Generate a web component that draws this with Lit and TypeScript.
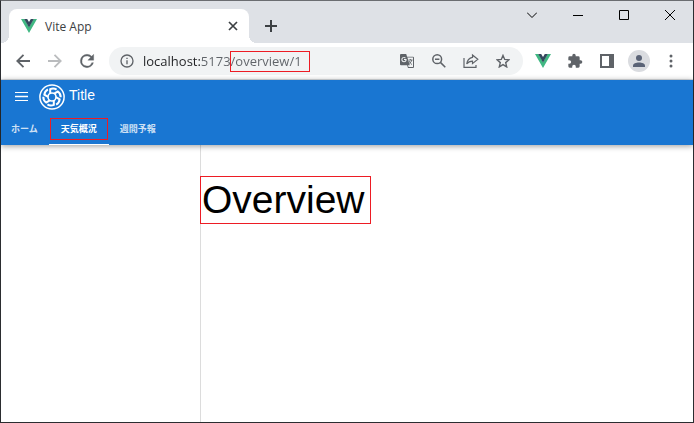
import { LitElement, html, css, svg } from "lit";
import { customElement, state } from "lit/decorators.js";
import { classMap } from "lit/directives/class-map.js";

const vueLogo = html`<svg class="vue" viewBox="0 0 16 14" aria-hidden="true">
  <path fill="#41b883" d="M0 0h3.400L8 8l4.600-8H16L8 14z" />
  <path fill="#34495e" d="M3.200 0H6.200L8 3l1.800-3h3L8 8.400z" />
</svg>`;

const blades = [0, 60, 120, 180, 240, 300];

@customElement("browser-chrome")
export class BrowserChrome extends LitElement {
  static styles = css`
    :host {
      display: block;
      flex: none;
      font-family: "Open Sans", "Noto Sans", sans-serif;
      color: #3c4043;
    }
    button {
      display: flex;
      align-items: center;
      justify-content: center;
      padding: 0;
      border: 0;
      background: none;
      color: #5f6368;
    }
    svg {
      display: block;
      fill: currentColor;
    }
    .line {
      fill: none;
      stroke: currentColor;
    }
    .strip {
      display: flex;
      align-items: flex-start;
      height: 42px;
      background: #dee1e6;
    }
    .tab {
      position: relative;
      display: flex;
      align-items: center;
      box-sizing: border-box;
      width: 240px;
      height: 34px;
      margin: 8px 0 0 8px;
      padding: 0 8px 0 12px;
      border-radius: 8px 8px 0 0;
      background: #fff;
      font-size: 12px;
    }
    .tab::before,
    .tab::after {
      content: "";
      position: absolute;
      bottom: 0;
      width: 8px;
      height: 8px;
    }
    .tab::before {
      right: 100%;
      background: radial-gradient(circle at 0 0, #dee1e6 8px, #fff 8px);
    }
    .tab::after {
      left: 100%;
      background: radial-gradient(circle at 100% 0, #dee1e6 8px, #fff 8px);
    }
    .tab-title {
      flex: 1;
      margin-left: 8px;
    }
    .vue {
      width: 16px;
      height: 14px;
    }
    .close {
      width: 16px;
      height: 16px;
      color: #3c4043;
    }
    .new {
      width: 28px;
      height: 28px;
      margin: 11px 0 0 8px;
      color: #3c4043;
    }
    .window {
      display: flex;
      margin-left: auto;
    }
    .window button {
      width: 46px;
      height: 28px;
      color: #000;
    }
    .toolbar {
      display: flex;
      align-items: center;
      box-sizing: border-box;
      height: 37px;
      padding: 0 6px;
      border-bottom: 1px solid #dcdfe3;
      background: #fff;
    }
    .toolbar button {
      width: 32px;
      height: 28px;
    }
    .toolbar .off {
      color: #babcbe;
    }
    .address {
      display: flex;
      flex: 1;
      align-items: center;
      min-width: 0;
      height: 28px;
      margin: 0 4px 0 6px;
      padding: 0 4px 0 2px;
      border-radius: 14px;
      background: #f1f3f4;
    }
    .field {
      position: relative;
      flex: 1;
      min-width: 0;
    }
    .field input {
      display: block;
      box-sizing: border-box;
      width: 100%;
      height: 20px;
      padding: 0;
      border: 0;
      outline: 0;
      font: 13px/20px "Open Sans", "Noto Sans", sans-serif;
      color: transparent;
      background: linear-gradient(90deg, #202124 57px, #5f6368 57px);
      background-clip: text;
    }
    .mark {
      position: absolute;
      top: 0;
      left: 87px;
      box-sizing: border-box;
      width: 80px;
      height: 21px;
      border: 1px solid #ed1c24;
      pointer-events: none;
    }
    .avatar {
      display: flex;
      align-items: center;
      justify-content: center;
      width: 22px;
      height: 22px;
      border-radius: 50%;
      background: #dadce0;
      color: #5a6376;
    }
  `;

  render() {
    return html`
      <div class="strip">
        <div class="tab">
          ${vueLogo}
          <span class="tab-title">Vite App</span>
          <button class="close" aria-label="Close tab">
            <svg class="line" width="10" height="10" viewBox="0 0 10 10" stroke-width="1.700">
              <path d="M1 1l8 8M9 1l-8 8" />
            </svg>
          </button>
        </div>
        <button class="new" aria-label="New tab">
          <svg class="line" width="12" height="12" viewBox="0 0 12 12" stroke-width="2">
            <path d="M6 0v12M0 6h12" />
          </svg>
        </button>
        <div class="window">
          <button aria-label="Search tabs">
            <svg class="line" width="10" height="10" viewBox="0 0 10 10">
              <path d="M0 2.500l5 5 5-5" />
            </svg>
          </button>
          <button aria-label="Minimize">
            <svg class="line" width="10" height="10" viewBox="0 0 10 10">
              <path d="M0 5.500h10" />
            </svg>
          </button>
          <button aria-label="Maximize">
            <svg class="line" width="10" height="10" viewBox="0 0 10 10">
              <path d="M.5.5h9v9h-9z" />
            </svg>
          </button>
          <button aria-label="Close">
            <svg class="line" width="10" height="10" viewBox="0 0 10 10">
              <path d="M0 0l10 10M10 0L0 10" />
            </svg>
          </button>
        </div>
      </div>
      <div class="toolbar">
        <button aria-label="Back">
          <svg class="line" width="14" height="14" viewBox="0 0 14 14" stroke-width="1.800">
            <path d="M14 7H1.500M7.500.8L1.300 7l6.200 6.200" />
          </svg>
        </button>
        <button class="off" aria-label="Forward">
          <svg class="line" width="14" height="14" viewBox="0 0 14 14" stroke-width="1.800">
            <path d="M0 7h12.500M6.500.8L12.700 7l-6.200 6.200" />
          </svg>
        </button>
        <button aria-label="Reload">
          <svg width="20" height="20" viewBox="0 0 24 24" stroke="currentColor" stroke-width=".4">
            <path d="M17.650 6.350A7.960 7.960 0 0 0 12 4a8 8 0 1 0 7.730 10h-2.080A6 6 0 1 1 12 6c1.660 0 3.140.69 4.220 1.780L13 11h7V4z" />
          </svg>
        </button>
        <div class="address">
          <button aria-label="Site information">
            <svg width="16" height="16" viewBox="0 0 24 24">
              <path d="M11 7h2v2h-2zm0 4h2v6h-2zm1-9a10 10 0 1 0 0 20 10 10 0 0 0 0-20zm0 18a8 8 0 1 1 0-16 8 8 0 0 1 0 16z" />
            </svg>
          </button>
          <div class="field">
            <input aria-label="Address" spellcheck="false" .value=${"localhost:5173/overview/1"} />
            <span class="mark"></span>
          </div>
          <button aria-label="Translate">
            <svg width="14" height="14" viewBox="0 0 14 14">
              <path fill-rule="evenodd" d="M1 0h5.200l.9 2.700H13a1 1 0 0 1 1 1V13a1 1 0 0 1-1 1H8l-.9-2.700H1a1 1 0 0 1-1-1V1a1 1 0 0 1 1-1zM7.400 3.600l2.400 7.700H7.900L8.600 13H13V3.600zM4 3a2.600 2.600 0 1 0 2.600 2.600V5H4v1h1.500A1.600 1.600 0 1 1 5 4.400l.8-.7A2.600 2.600 0 0 0 4 3z" />
              <path class="line" d="M8.500 6H12.500M10.400 5v1M11.800 6c-.3 1.600-1.300 2.700-2.300 3.500M9 7c.6 1.400 1.700 2.600 3 3.600" stroke-width=".9" />
            </svg>
          </button>
          <button aria-label="Zoom">
            <svg class="line" width="14" height="14" viewBox="0 0 14 14" stroke-width="1.500">
              <circle cx="5.200" cy="5.200" r="4.400" />
              <path d="M8.400 8.400l4.900 4.900M3 5.200h4.400" />
            </svg>
          </button>
          <button aria-label="Share">
            <svg class="line" width="16" height="16" viewBox="0 0 16 16" stroke-width="1.200">
              <path d="M1 5v9.400h12V12M9.500 2l5.300 4.300-5.300 4.300V8.200C7 8.200 5.200 9 3.700 11 4.200 7.500 6.200 5 9.500 4.400z" />
            </svg>
          </button>
          <button aria-label="Bookmark">
            <svg class="line" width="14" height="14" viewBox="0 0 14 14" stroke-width="1.400">
              <path d="M7 1.400l1.700 4 4.300.4-3.300 2.800 1 4.300L7 10.600l-3.700 2.300 1-4.300L1 5.800l4.300-.4z" />
            </svg>
          </button>
        </div>
        <button aria-label="Vue devtools">${vueLogo}</button>
        <button aria-label="Extensions">
          <svg width="16" height="16" viewBox="0 0 24 24">
            <path d="M20.500 11H19V7a2 2 0 0 0-2-2h-4V3.500a2.500 2.500 0 0 0-5 0V5H4a2 2 0 0 0-2 2v3.800h1.500a2.700 2.700 0 0 1 0 5.400H2V20a2 2 0 0 0 2 2h3.800v-1.500a2.700 2.700 0 0 1 5.400 0V22H17a2 2 0 0 0 2-2v-4h1.500a2.500 2.500 0 0 0 0-5z" />
          </svg>
        </button>
        <button aria-label="Side panel">
          <svg width="14" height="14" viewBox="0 0 14 14">
            <path fill-rule="evenodd" d="M0 0h14v14H0zM2 2v10h7V2z" />
          </svg>
        </button>
        <button aria-label="Profile">
          <span class="avatar">
            <svg width="12" height="12" viewBox="0 0 12 12">
              <circle cx="6" cy="3" r="3" />
              <path d="M0 12v-1.500C0 8.500 3 7.400 6 7.400s6 1.100 6 3.100V12z" />
            </svg>
          </span>
        </button>
        <button aria-label="Menu">
          <svg width="4" height="14" viewBox="0 0 4 14">
            <circle cx="2" cy="2" r="1.500" /><circle cx="2" cy="7" r="1.500" /><circle cx="2" cy="12" r="1.500" />
          </svg>
        </button>
      </div>
    `;
  }
}

@customElement("app-root")
export class AppRoot extends LitElement {
  static styles = css`
    :host {
      display: flex;
      flex-direction: column;
      box-sizing: border-box;
      min-height: 100vh;
      border: 1px solid #2b2d30;
      border-top-color: #6b6d71;
      background: #fff;
      font-family: "Liberation Sans", "Noto Sans CJK JP", sans-serif;
    }
    .header {
      position: relative;
      flex: none;
      color: #fff;
      background: #1976d2;
      box-shadow: 0 1px 6px rgba(0, 0, 0, 0.4);
    }
    .bar {
      display: flex;
      align-items: center;
      height: 33px;
      padding-left: 8px;
    }
    .menu {
      display: flex;
      align-items: center;
      justify-content: center;
      width: 24px;
      height: 24px;
      padding: 0;
      border: 0;
      background: none;
      color: inherit;
    }
    .logo {
      width: 26px;
      height: 26px;
      margin-left: 6px;
    }
    .title {
      margin-left: 4px;
      padding-bottom: 3px;
      font-size: 14px;
      line-height: 20px;
    }
    .tabs {
      display: flex;
      gap: 1px;
      height: 32px;
    }
    .tabs button {
      display: flex;
      align-items: center;
      box-sizing: border-box;
      height: 32px;
      padding: 0 10px;
      border: 0;
      border-bottom: 1px solid transparent;
      background: none;
      color: rgba(255, 255, 255, 0.8);
      font: bold 9px/20px "Noto Sans CJK JP", sans-serif;
    }
    .tabs .active {
      padding: 0 1px;
      border-color: #fff;
      color: #fff;
    }
    .active span {
      padding: 0 10px;
      border: 1px solid #ed1c24;
    }
    .body {
      display: flex;
      flex: 1;
    }
    .drawer {
      box-sizing: border-box;
      width: 200px;
      border-right: 1px solid #dcdcdc;
    }
    .page {
      flex: 1;
      padding-top: 31px;
    }
    h1 {
      box-sizing: border-box;
      width: fit-content;
      margin: 0 0 0 -1px;
      padding: 0 5px 0 1px;
      border: 1px solid #ed1c24;
      font-size: 39px;
      font-weight: 400;
      line-height: 46px;
      color: #000;
    }
  `;

  @state() private current = 1;

  private tabs = ["ホーム", "天気概況", "週間予報"];

  render() {
    return html`
      <browser-chrome></browser-chrome>
      <header class="header">
        <div class="bar">
          <button class="menu" aria-label="Menu">
            <svg width="13" height="9" viewBox="0 0 13 9" fill="currentColor">
              <path d="M0 0h13v1H0zM0 3.800h13v1.400H0zM0 8h13v1H0z" />
            </svg>
          </button>
          <svg class="logo" viewBox="0 0 26 26" fill="none" stroke="#fff" aria-hidden="true">
            <circle cx="13" cy="13" r="12.100" stroke-width="1.500" />
            <circle cx="13" cy="13" r="4" stroke-width="1.600" />
            ${blades.map(
              (a) => svg`<path stroke-width="2" transform="rotate(${a} 13 13)"
                d="M11.200 9.500V5.200C13.200 4.300 15.600 4.400 17.600 5.600" />`,
            )}
          </svg>
          <span class="title">Title</span>
        </div>
        <nav class="tabs">
          ${this.tabs.map(
            (label, i) => html`<button
              class=${classMap({ active: i === this.current })}
              @click=${() => (this.current = i)}
            ><span>${label}</span></button>`,
          )}
        </nav>
      </header>
      <div class="body">
        <aside class="drawer"></aside>
        <main class="page"><h1>Overview</h1></main>
      </div>
    `;
  }
}
